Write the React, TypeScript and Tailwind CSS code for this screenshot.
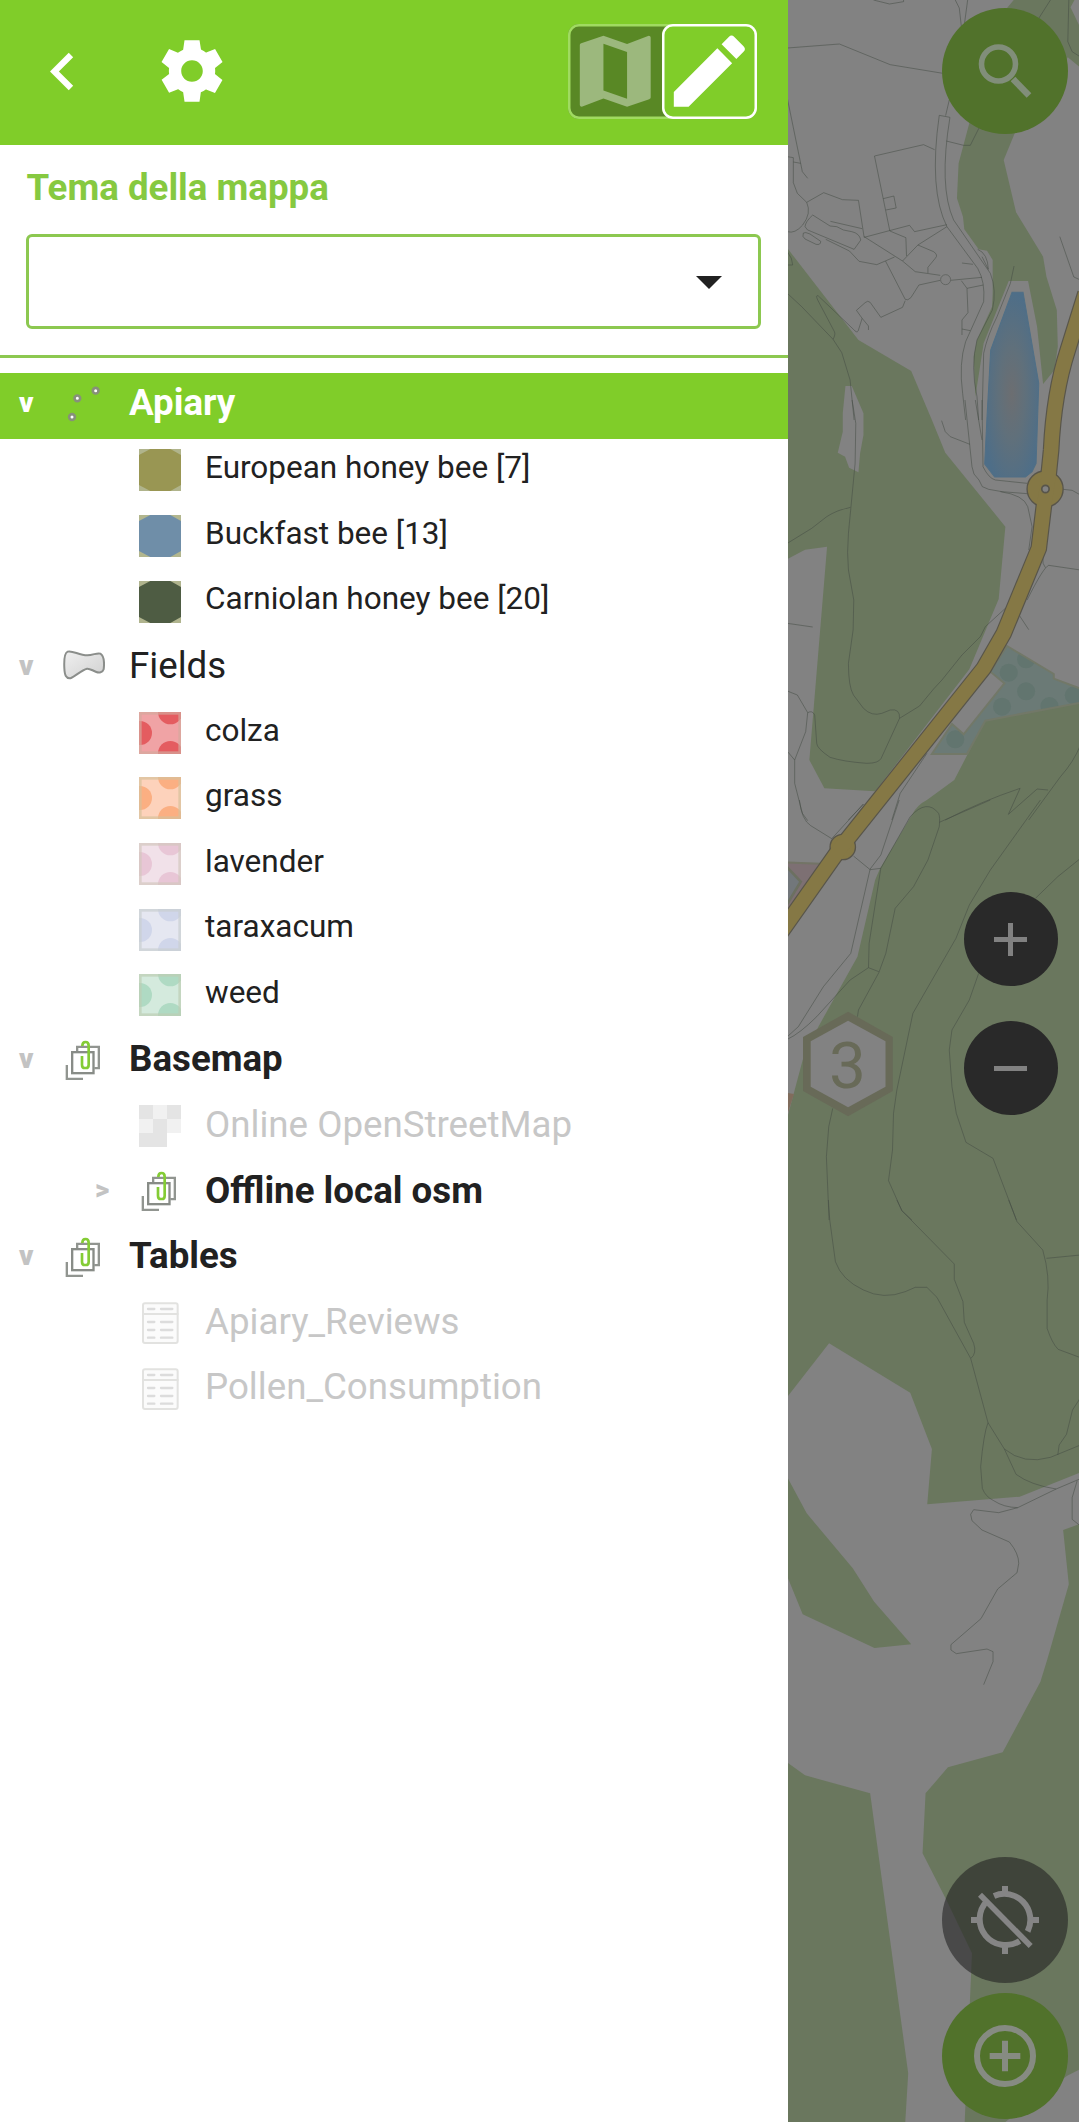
import type { ReactNode } from "react";
import { MdAdd, MdChevronLeft, MdEdit, MdMap, MdRemove } from "react-icons/md";

type IconKind = "points" | "polygon" | "group" | "raster" | "table" | "hex" | "dots";

interface LayerRow {
  label: string;
  level: 0 | 1;
  icon: IconKind;
  arrow?: string;
  style: "group" | "layer" | "legend" | "hidden";
  selected?: boolean;
  fill?: string;
  dot?: string;
  edge?: string;
}

const rows: LayerRow[] = [
  { label: "Apiary", level: 0, icon: "points", arrow: "v", style: "group", selected: true },
  { label: "European honey bee [7]", level: 1, icon: "hex", style: "legend", fill: "#999653", edge: "#b0b48c" },
  { label: "Buckfast bee [13]", level: 1, icon: "hex", style: "legend", fill: "#6f8ea8", edge: "#b2b68e" },
  { label: "Carniolan honey bee [20]", level: 1, icon: "hex", style: "legend", fill: "#4e5c43", edge: "#b0b48e" },
  { label: "Fields", level: 0, icon: "polygon", arrow: "v", style: "layer" },
  { label: "colza", level: 1, icon: "dots", style: "legend", fill: "#f0a3a5", dot: "#e45c60", edge: "#d4a89c" },
  { label: "grass", level: 1, icon: "dots", style: "legend", fill: "#fdd2bb", dot: "#fbaf82", edge: "#d6c09a" },
  { label: "lavender", level: 1, icon: "dots", style: "legend", fill: "#f1e1e9", dot: "#e8c6d6", edge: "#d3c7be" },
  { label: "taraxacum", level: 1, icon: "dots", style: "legend", fill: "#e5e7f1", dot: "#d0d6ea", edge: "#c9cfd0" },
  { label: "weed", level: 1, icon: "dots", style: "legend", fill: "#d4eadd", dot: "#afdac3", edge: "#bdcdb4" },
  { label: "Basemap", level: 0, icon: "group", arrow: "v", style: "group" },
  { label: "Online OpenStreetMap", level: 1, icon: "raster", style: "hidden" },
  { label: "Offline local osm", level: 1, icon: "group", arrow: ">", style: "group" },
  { label: "Tables", level: 0, icon: "group", arrow: "v", style: "group" },
  { label: "Apiary_Reviews", level: 1, icon: "table", style: "hidden" },
  { label: "Pollen_Consumption", level: 1, icon: "table", style: "hidden" },
];

const labelStyles = {
  group: "pb-[4px] text-[36.7px] font-bold text-[#212121]",
  layer: "pb-[4px] text-[36.7px] text-[#212121]",
  legend: "pb-[7px] text-[31.5px] text-[#212121]",
  hidden: "pb-[4px] text-[36.7px] text-[#c7c7c7]",
};

function LayerIcon({ row }: { row: LayerRow }) {
  let art: ReactNode = null;
  switch (row.icon) {
    case "points":
      art = [[27, 99], [43, 43], [98, 20]].map(([x, y]) => (
        <circle key={x} cx={x} cy={y} r="8.5" fill="#fff" stroke="#87907a" strokeWidth="8" />
      ));
      break;
    case "polygon":
      art = (
        <>
          <defs>
            <linearGradient id="poly" x1="0" y1="0" x2="1" y2="1">
              <stop offset="0" stopColor="#f0f0f0" />
              <stop offset="1" stopColor="#d0d0d0" />
            </linearGradient>
          </defs>
          <path
            d="M14 17C28 12 48 28 73 28C90 28 103 19 112 23C123 30 124 54 122 70C119 80 108 81 100 78C87 73 81 67 72 68C55 72 36 92 22 97C9 98 5 88 4 66C3 45 4 21 14 17Z"
            fill="url(#poly)" stroke="#8b8e8b" strokeWidth="6"
          />
        </>
      );
      break;
    case "group":
      art = (
        <g fill="none" strokeWidth="7">
          <path d="M11.5 75V116.5H60" stroke="#919590" />
          <path d="M42.5 33V20.5H107.5V84.5H94" stroke="#919590" />
          <rect x="27.5" y="36.5" width="64" height="63" fill="#fff" stroke="#888c87" />
          <path d="M57 48V74Q57 84 65 84H69Q77 84 77 74V17Q77 6 67.5 6Q58 6 58 18" stroke="#84cc35" strokeWidth="8" />
        </g>
      );
      break;
    case "raster":
      art = (
        <>
          <path d="M0 0H42V42H0ZM84 0H126V42H84ZM42 42H84V84H42ZM0 84H84V126H0Z" fill="#e4e4e4" />
          <path d="M42 0H84V42H42ZM0 42H42V84H0ZM84 42H126V84H84Z" fill="#f1f1f1" />
        </>
      );
      break;
    case "table":
      art = (
        <g stroke="#e2e2e0" strokeWidth="6" fill="none" strokeLinecap="round">
          <rect x="12" y="4" width="104" height="119" rx="6" fill="#fbfbfb" />
          <path d="M12 36H116" />
          <path
            d="M27 21H46M66 21H100M27 60H46M66 60H100M27 84H46M66 84H100M27 107H46M66 107H100"
            stroke="#dcdcdc" strokeWidth="7"
          />
        </g>
      );
      break;
    case "hex":
      art = (
        <>
          <rect width="126" height="126" fill={row.edge} />
          <path d="M34 0H94L126 18V108L94 126H34L0 108V18Z" fill={row.fill} />
        </>
      );
      break;
    case "dots":
      art = (
        <>
          <rect width="126" height="126" fill={row.fill} />
          <g fill={row.dot}>
            <circle cx="3" cy="63" r="36" />
            <circle cx="94" cy="0" r="37" />
            <circle cx="94" cy="124" r="37" />
          </g>
          <rect x="4" y="4" width="118" height="118" fill="none" stroke={row.edge} strokeWidth="8" opacity="0.7" />
        </>
      );
      break;
  }
  return (
    <svg viewBox="0 0 126 126" className="mb-[2px] size-[42px] shrink-0">
      {art}
    </svg>
  );
}

function Row({ row }: { row: LayerRow }) {
  return (
    <div
      className={`flex h-[65.6px] items-center ${row.level ? "pl-[95px]" : "pl-[19px]"} ${row.selected ? "bg-[#80cd29]" : ""}`}
    >
      <span className={`w-11 shrink-0 pb-[5px] text-[28px] font-black leading-none ${row.selected ? "text-white" : "text-[#c3c3c3]"}`}>
        {row.arrow}
      </span>
      <LayerIcon row={row} />
      <span className={`ml-6 whitespace-nowrap leading-none ${labelStyles[row.style]} ${row.selected ? "text-white!" : ""}`}>
        {row.label}
      </span>
    </div>
  );
}

const woods = [
  "M700 0L680 24L640 200L567 370L535 490L530 595L548 650L552 688L595 748L620 752L637 780V880L635 920L590 1020L580 1070L585 1190L610 1030L685 843H743L770 980L788 1152L822 1110L832 1040L829 930L798 830L788 770L707 637L670 480L703 400L862 172L900 203V84L870 22L882 0Z",
  "M20 742L235 1020L393 1113L455 1260L495 1358L675 1580L655 1797L567 2008L285 2374L133 2365L88 2280L141 1640L75 1649L20 1678Z",
  "M900 2106L615 2160L522 2340L440 2400Q410 2415 395 2445L300 2605L285 2640L232 2870L115 3080L68 3180L40 3285L20 3360V4193L147 4030L390 4178L455 4347L441 4513L718 4490L900 4417Z",
  "M20 4428L80 4540L218 4705L282 4805L393 4933L283 4944L68 4843L20 4725Z",
  "M900 4571L848 4590L865 4753L800 4980L780 5045L667 5257L503 5302L436 5380L427 5560L497 5697L575 5860L553 6370H670L720 6330L860 6227L900 6207Z",
  "M20 5286L75 5326L270 5380L384 6220L375 6370H20Z",
];

// Minor roads and paths, each group starting at its own vertical offset.
const lanes: { offset: number; d: string }[] = [
  {
    offset: 0,
    d: "M22 144L178 132L330 194L488 220M280 0L328 12L370 5V0M525 0L537 24L543 78M562 0L552 75M22 295L67 515L83 535M22 470L40 473V548L52 580L80 607Q95 640 68 675Q45 702 22 695M40 486L62 490M80 607L131 578L187 599L235 601L252 712L388 676L403 695L500 674M151 664L246 686M283 468L430 434L463 449M283 468L329 693M309 596L341 588L348 624L317 630M252 710L367 783L405 815L480 826M329 693L377 713L379 768M500 680L413 735L367 783M413 735L460 755Q475 765 465 775L443 802V819M137 718L208 753L237 784L290 794L343 771M316 783L375 898Q382 903 392 893L416 855L480 841M375 902L367 922L302 952L270 907Q263 900 255 908L229 931L246 955L265 978V990M246 955L234 993Q230 1000 220 988L115 888Q105 883 113 900L163 995Q167 1003 159 1018M22 880L65 920L159 1018L185 1058L210 1140L222 1260M511 841L605 832M543 842L560 865L609 855M560 865L563 938L545 960V1005M545 987L570 992M545 789L578 793M477 346L509 352M507 300L496 347M498 423L550 436H570L598 380M477 346Q445 570 500 680L592 805Q615 845 610 905L556 1025Q535 1090 547 1180L556 1260M509 352Q475 560 520 660L630 820Q650 870 636 930L590 1020Q570 1100 590 1190L595 1260M605 1260L610 1060Q620 1010 650 950L690 850L701 798M810 0L775 55M865 0L862 125L875 155L900 171M838 710L880 831L900 840M22 755Q38 775 38 795H22M98 645Q76 665 75 680Q80 692 95 695L222 748Q235 730 242 720Q238 700 215 695L190 690L170 680L150 678L98 645ZM70 699Q65 710 75 717L108 733Q122 736 122 724L90 702Q75 695 70 699ZM592 748Q622 760 624 808L605 770",
  },
  {
    offset: 1200,
    d: "M216 0L227 70L225 190L205 400Q200 460 205 510L221 600L219 690L205 790Q205 860 220 885L250 925Q275 950 305 940L330 930Q360 925 358 955M211 322Q170 330 140 350L95 385L22 430M22 670L98 681M358 955L418 918L460 867L485 840L545 765L600 710L615 680L675 625M358 955L303 1075Q295 1090 260 1090Q190 1085 150 1072Q110 1045 110 1030L104 945Q97 930 83 938L52 885L22 873M83 938L77 995L44 1080V1150L67 1240L83 1262M22 1054L44 1080M205 1260L250 1212M484 62L495 95L510 110L569 133M554 0L575 200L581 222L596 240L606 260L625 268L665 275L740 281M585 0L605 120M605 0L608 200Q625 235 645 240L740 250M660 275Q730 285 742 320L755 380L745 450M848 268L875 271L900 285M900 510L805 496Q790 500 740 600M787 462L788 490L795 503M716 645L745 689M900 1035Q880 1085 840 1130L745 1260M803 1170L770 1167L684 1243L719 1165Q600 1205 495 1260M440 1060L360 1180L335 1260",
  },
  {
    offset: 2400,
    d: "M58 0Q65 60 92 77L155 116L250 12M357 0L302 165L270 207L212 460L130 560L55 680L22 710M302 205L270 209L220 168M302 205L267 430L265 503L296 515M302 205L390 50Q440 -5 475 40Q480 50 477 80L443 180L400 260L345 325L317 460L296 518L235 630L232 650M265 503L210 540L110 650Q60 700 22 718M477 67L630 0M780 0L630 210L567 315L527 415L398 640L350 870L340 940L337 1050L325 1142L365 1232L395 1260M900 175L832 230L765 295M595 520L567 600L515 690L507 750L515 860L528 940L557 1027L638 1075L708 1260M158 925L146 980L139 1070L147 1260",
  },
  {
    offset: 3600,
    d: "M145 0L149 60L166 185Q185 240 250 270Q310 300 375 275L405 262H440L470 292L571 475L623 668L672 747Q730 795 810 772L900 735M350 0L365 32L522 192V238L548 305L552 367L580 430Q590 460 572 475M685 0L710 65L787 150Q810 230 800 300V385Q815 430 833 448L900 473M798 175L900 165M623 668Q610 700 601 800L606 865Q615 890 640 902Q670 922 712 923L827 867L900 836M672 747L707 823Q750 855 827 867M832 765L836 735L858 703L876 630L900 593M712 923L655 938L580 929L571 943L575 962L605 990L687 1026Q715 1060 715 1090L710 1118L652 1167L602 1256L512 1334V1350L528 1361L620 1347L638 1355V1385L610 1454M890 842L875 893V958L900 978",
  },
];

const yellowRoad = "M915 880L862 1050Q820 1180 812 1350L803 1440L790 1520L775 1645L670 1900L610 2005L180 2545L-10 2815";

const meadow = "M680 1938L820 2022V2036L900 2066V2108L615 2162L560 2262H455L515 2172L550 2203L672 2050L630 2015Z";

const meadowDots = [[685, 2018], [737, 1978], [737, 2074], [665, 2120], [807, 2118], [880, 2086], [525, 2218]];

function MapCanvas() {
  return (
    <svg viewBox="24 0 873 6366" preserveAspectRatio="none" className="block h-full w-full">
      <defs>
        <radialGradient id="lake" cx="0.5" cy="0.55" r="0.55">
          <stop offset="0" stopColor="#6c6e71" />
          <stop offset="0.45" stopColor="#60707b" />
          <stop offset="1" stopColor="#4e6e88" />
        </radialGradient>
        <clipPath id="meadow">
          <path d={meadow} />
        </clipPath>
      </defs>
      <rect width="900" height="6370" fill="#828282" />
      {woods.map((d) => (
        <path key={d} d={d} fill="#6a775e" />
      ))}
      <path d="M196 1158H215L250 1240V1305L240 1360L235 1417L207 1403L195 1370L173 1358L188 1295V1240Z" fill="#828282" />
      <path d="M695 877H728L775 1150L767 1390L755 1415L735 1431H643L613 1392L620 1250L631 1050Z" fill="url(#lake)" stroke="#506f86" strokeWidth="3" />
      <path d={meadow} fill="#6b7a76" />
      <g clipPath="url(#meadow)" fill="#62756f">
        {meadowDots.map(([x, y]) => (
          <circle key={`${x}-${y}`} cx={x} cy={y} r="27" />
        ))}
      </g>
      <path d={meadow} fill="none" stroke="#727868" strokeWidth="6" />
      <path d="M20 2587L135 2592L20 2740Z" fill="#7d7073" stroke="#737466" strokeWidth="6" />
      <path d="M20 2600L62 2645L20 2715Z" fill="#72777b" stroke="#6c7061" strokeWidth="8" />
      <path d="M20 3278L42 3282L20 3350Z" fill="#806c5c" />
      {lanes.map(({ offset, d }) => (
        <path key={offset} d={d} transform={`translate(0 ${offset})`} fill="none" stroke="#444b44" strokeOpacity="0.6" strokeWidth="2.6" />
      ))}
      <circle cx="496" cy="839" r="15" fill="#828282" stroke="#5c605c" strokeWidth="2.4" />
      <path d={yellowRoad} fill="none" stroke="#58554a" strokeWidth="50" />
      <circle cx="794" cy="1467" r="54" fill="#857845" stroke="#58554a" strokeWidth="4" />
      <circle cx="188" cy="2541" r="38" fill="#857845" stroke="#58554a" strokeWidth="4" />
      <path d={yellowRoad} fill="none" stroke="#857845" strokeWidth="43" />
      <circle cx="795" cy="1467" r="11" fill="#828282" stroke="#58554a" strokeWidth="5" />
      <path d="M204 3035L338 3111V3273L204 3349L69 3273V3111Z" fill="#686a58" />
      <path d="M204 3062L316 3124V3260L204 3322L92 3260V3124Z" fill="#828282" />
      <text x="202" y="3265" textAnchor="middle" fontSize="197" fill="#686a58" fontFamily="Roboto, sans-serif">
        3
      </text>
    </svg>
  );
}

export default function App() {
  return (
    <div className="flex h-[2122px] w-[1080px] overflow-hidden bg-white font-['Roboto',sans-serif]">
      <aside className="flex w-[787.5px] shrink-0 flex-col bg-white">
        <header className="flex h-[144.5px] shrink-0 items-center bg-[#80cd29] pl-[25px] pr-[31px] pb-[2px] text-white">
          <MdChevronLeft className="size-[75px]" />
          <svg viewBox="0 0 24 24" fill="currentColor" className="ml-[54.5px] size-[74px]">
            <path d="M19.44 12.99l.01-.02c.04-.32.08-.64.08-.99 0-.34-.03-.66-.07-.98l.01.02 2.44-1.92-2.43-4.22-2.87 1.16.01.01c-.52-.4-1.09-.74-1.71-1h.01L14.44 2H9.57l-.44 3.07h.01c-.62.26-1.19.6-1.71 1l.01-.01-2.88-1.17-2.44 4.22 2.44 1.92.01-.02c-.04.32-.07.64-.07.98 0 .35.03.67.08.98l-.01-.02-2.1 1.65-.33.26 2.43 4.2 2.88-1.15-.02-.04c.53.41 1.1.75 1.73 1.01h-.03L9.58 22h4.85s.03-.18.06-.42l.38-2.65h-.01c.62-.26 1.2-.6 1.73-1.01l-.02.04 2.88 1.15 2.43-4.2s-.14-.12-.33-.26l-2.11-1.66zM12 15.5c-1.93 0-3.5-1.57-3.5-3.5s1.57-3.5 3.5-3.5 3.5 1.57 3.5 3.5-1.57 3.5-3.5 3.5z" />
          </svg>
          <div className="ml-auto flex h-[95px] w-[189px] rounded-[11px] bg-[#598825] shadow-[inset_0_0_0_2.5px_#a0db61]">
            <div className="flex w-[94.5px] items-center justify-center">
              <MdMap className="size-[94.5px] shrink-0 text-[#9cb87d]" />
            </div>
            <div className="flex w-[94.5px] items-center justify-center rounded-[11px] bg-[#80cd29] shadow-[inset_0_0_0_2.5px_#fff]">
              <MdEdit className="size-[94.5px] shrink-0" />
            </div>
          </div>
        </header>
        <section className="flex h-[213.5px] shrink-0 flex-col border-b-[3px] border-[#8cc850] px-[26px]">
          <h1 className="mt-[25px] pl-[0.5px] text-[36.7px] leading-[36px] font-bold text-[#86c940]">Tema della mappa</h1>
          <div className="mt-[28px] flex h-[95px] w-[735px] items-center justify-end rounded-[6px] border-[3px] border-[#8cc850] pt-0.5 pr-9">
            <svg viewBox="0 0 26 13" className="h-[13px] w-[26px]">
              <path d="M0 0H26L13 13Z" fill="#212121" />
            </svg>
          </div>
        </section>
        <div className="mt-[15px] flex flex-col">
          {rows.map((row) => (
            <Row key={row.label} row={row} />
          ))}
        </div>
      </aside>
      <main className="relative w-[291.5px] shrink-0 overflow-hidden bg-[#828282]">
        <MapCanvas />
        <button className="absolute top-[8px] left-[154.5px] flex size-[126px] items-center justify-center rounded-full bg-[#51722b]">
          <svg viewBox="0 0 54 54" className="size-[54px] text-[#818e7a]" fill="none" stroke="currentColor">
            <circle cx="20.5" cy="20" r="17" strokeWidth="5.6" />
            <path d="M35 35L51 51.5" strokeWidth="6.5" />
          </svg>
        </button>
        <button className="absolute top-[892px] left-[176px] flex size-[94px] items-center justify-center rounded-full bg-[#292929]">
          <svg viewBox="0 0 33 33" className="size-[33px] text-[#818181]" fill="none" stroke="currentColor" strokeWidth="5">
            <path d="M16.5 0V33M0 16.5H33" />
          </svg>
        </button>
        <button className="absolute top-[1021px] left-[176px] flex size-[94px] items-center justify-center rounded-full bg-[#292929]">
          <svg viewBox="0 0 33 33" className="size-[33px] text-[#818181]" fill="none" stroke="currentColor" strokeWidth="5">
            <path d="M0 16.5H33" />
          </svg>
        </button>
        <button className="absolute top-[1857px] left-[154.5px] flex size-[126px] items-center justify-center rounded-full bg-[#232323]/60">
          <svg viewBox="0 0 204 204" className="size-[68px] text-[#858585]" fill="none" stroke="currentColor" strokeWidth="18">
            <path d="M102 0V28M102 176V204M0 102H28M176 102H204" />
            <path d="M69 31A78 78 0 0 1 170 137M146 166A78 78 0 0 1 48 46" transform="translate(0 -1)" />
            <path d="M27 26L179 180" strokeWidth="17" />
          </svg>
        </button>
        <button className="absolute top-[1993px] left-[154.5px] flex size-[126px] items-center justify-center rounded-full bg-[#51722b]">
          <svg viewBox="0 0 186 186" className="size-[62px] text-[#868b82]" fill="none" stroke="currentColor" strokeWidth="18">
            <circle cx="93" cy="93" r="84" />
            <path d="M93 47V139M47 93H139" />
          </svg>
        </button>
      </main>
    </div>
  );
}
